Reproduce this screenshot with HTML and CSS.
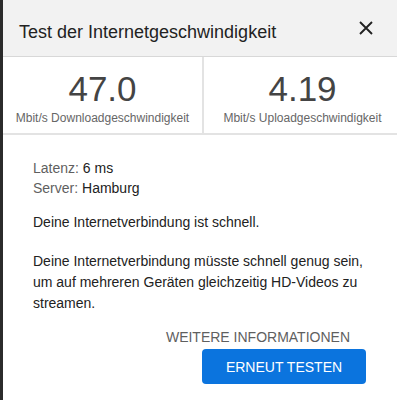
FILE: index.html
```html
<!DOCTYPE html>
<html lang="de">
  <head>
    <meta charset="UTF-8">
    <meta name="viewport" content="width=device-width, initial-scale=1.0">
    <title>Test der Internetgeschwindigkeit</title>
    <link rel="stylesheet" href="styles.css">
  </head>
  <body>
    <div class="dialog">
      <div class="header">
        <h1>Test der Internetgeschwindigkeit</h1>
        <button class="close-btn" aria-label="Schließen">
          <svg width="14" height="14" viewBox="0 0 14 14">
            <path d="M1 1 L13 13 M13 1 L1 13" stroke="#222" stroke-width="1.9" fill="none"/>
          </svg>
        </button>
      </div>

      <div class="stats">
        <div class="stat">
          <div class="stat-value">47.0</div>
          <div class="stat-label">Mbit/s Downloadgeschwindigkeit</div>
        </div>
        <div class="stat stat-right">
          <div class="stat-value">4.19</div>
          <div class="stat-label">Mbit/s Uploadgeschwindigkeit</div>
        </div>
      </div>

      <div class="content">
        <div class="details">
          <div><span class="key">Latenz:</span> 6 ms</div>
          <div><span class="key">Server:</span> Hamburg</div>
        </div>
        <p class="status">Deine Internetverbindung ist schnell.</p>
        <p class="desc">Deine Internetverbindung müsste schnell genug sein, um auf mehreren Geräten gleichzeitig HD-Videos zu streamen.</p>

        <div class="actions">
          <button class="link-btn">WEITERE INFORMATIONEN</button>
          <button class="primary-btn">ERNEUT TESTEN</button>
        </div>
      </div>
    </div>
  </body>
</html>
```

FILE: styles.css
```css
* { box-sizing: border-box; margin: 0; padding: 0; }
:root {
  --header-bg: #f2f2f2;
  --line-color: #e3e3e3;
  --text-color: #222;
  --muted-color: #5f5f5f;
  --primary-color: #0b74de;
}
body {
  font-family: "Liberation Sans", Arial, sans-serif;
  background: #2b2b2b;
  color: var(--text-color);
  overflow: hidden;
}
.dialog {
  margin-left: 3px;
  width: 398px;
  height: 400px;
  background: #fff;
}
.header {
  height: 57px;
  background: var(--header-bg);
  border-bottom: 1px solid #d8d8d8;
  display: flex;
  justify-content: space-between;
  align-items: flex-start;
  padding: 0 28px 0 16px;
}
h1 {
  font-size: 18px;
  font-weight: 400;
  line-height: 22px;
  margin-top: 21px;
  color: var(--text-color);
}
.close-btn {
  background: none;
  border: none;
  margin-top: 21px;
  width: 14px;
  height: 14px;
  cursor: pointer;
}
.close-btn svg {
  display: block;
}
.stats {
  display: flex;
  height: 78px;
  border-bottom: 2px solid var(--line-color);
}
.stat {
  width: 199px;
  text-align: center;
  padding-top: 12px;
}
.stat-right {
  flex: 1;
  border-left: 2px solid var(--line-color);
}
.stat-value {
  font-size: 35px;
  line-height: 40px;
  color: #444;
}
.stat-label {
  font-size: 12px;
  line-height: 14px;
  margin-top: 2px;
  color: #666;
}
.content {
  padding: 23px 30px 0 30px;
  font-size: 14px;
}
.details {
  line-height: 20px;
}
.key {
  color: var(--muted-color);
}
.status {
  margin-top: 14px;
  line-height: 21px;
}
.desc {
  margin-top: 18px;
  line-height: 21px;
}
.actions {
  display: flex;
  flex-direction: column;
  align-items: flex-end;
  width: 333px;
  margin-top: 13px;
}
button {
  font-family: inherit;
}
.link-btn {
  background: none;
  border: none;
  font-size: 14px;
  line-height: 20px;
  color: var(--muted-color);
  padding-right: 16px;
  cursor: pointer;
}
.primary-btn {
  margin-top: 2px;
  width: 164px;
  height: 35px;
  background: var(--primary-color);
  color: #fff;
  border: none;
  border-radius: 4px;
  font-size: 14px;
  cursor: pointer;
}
```
